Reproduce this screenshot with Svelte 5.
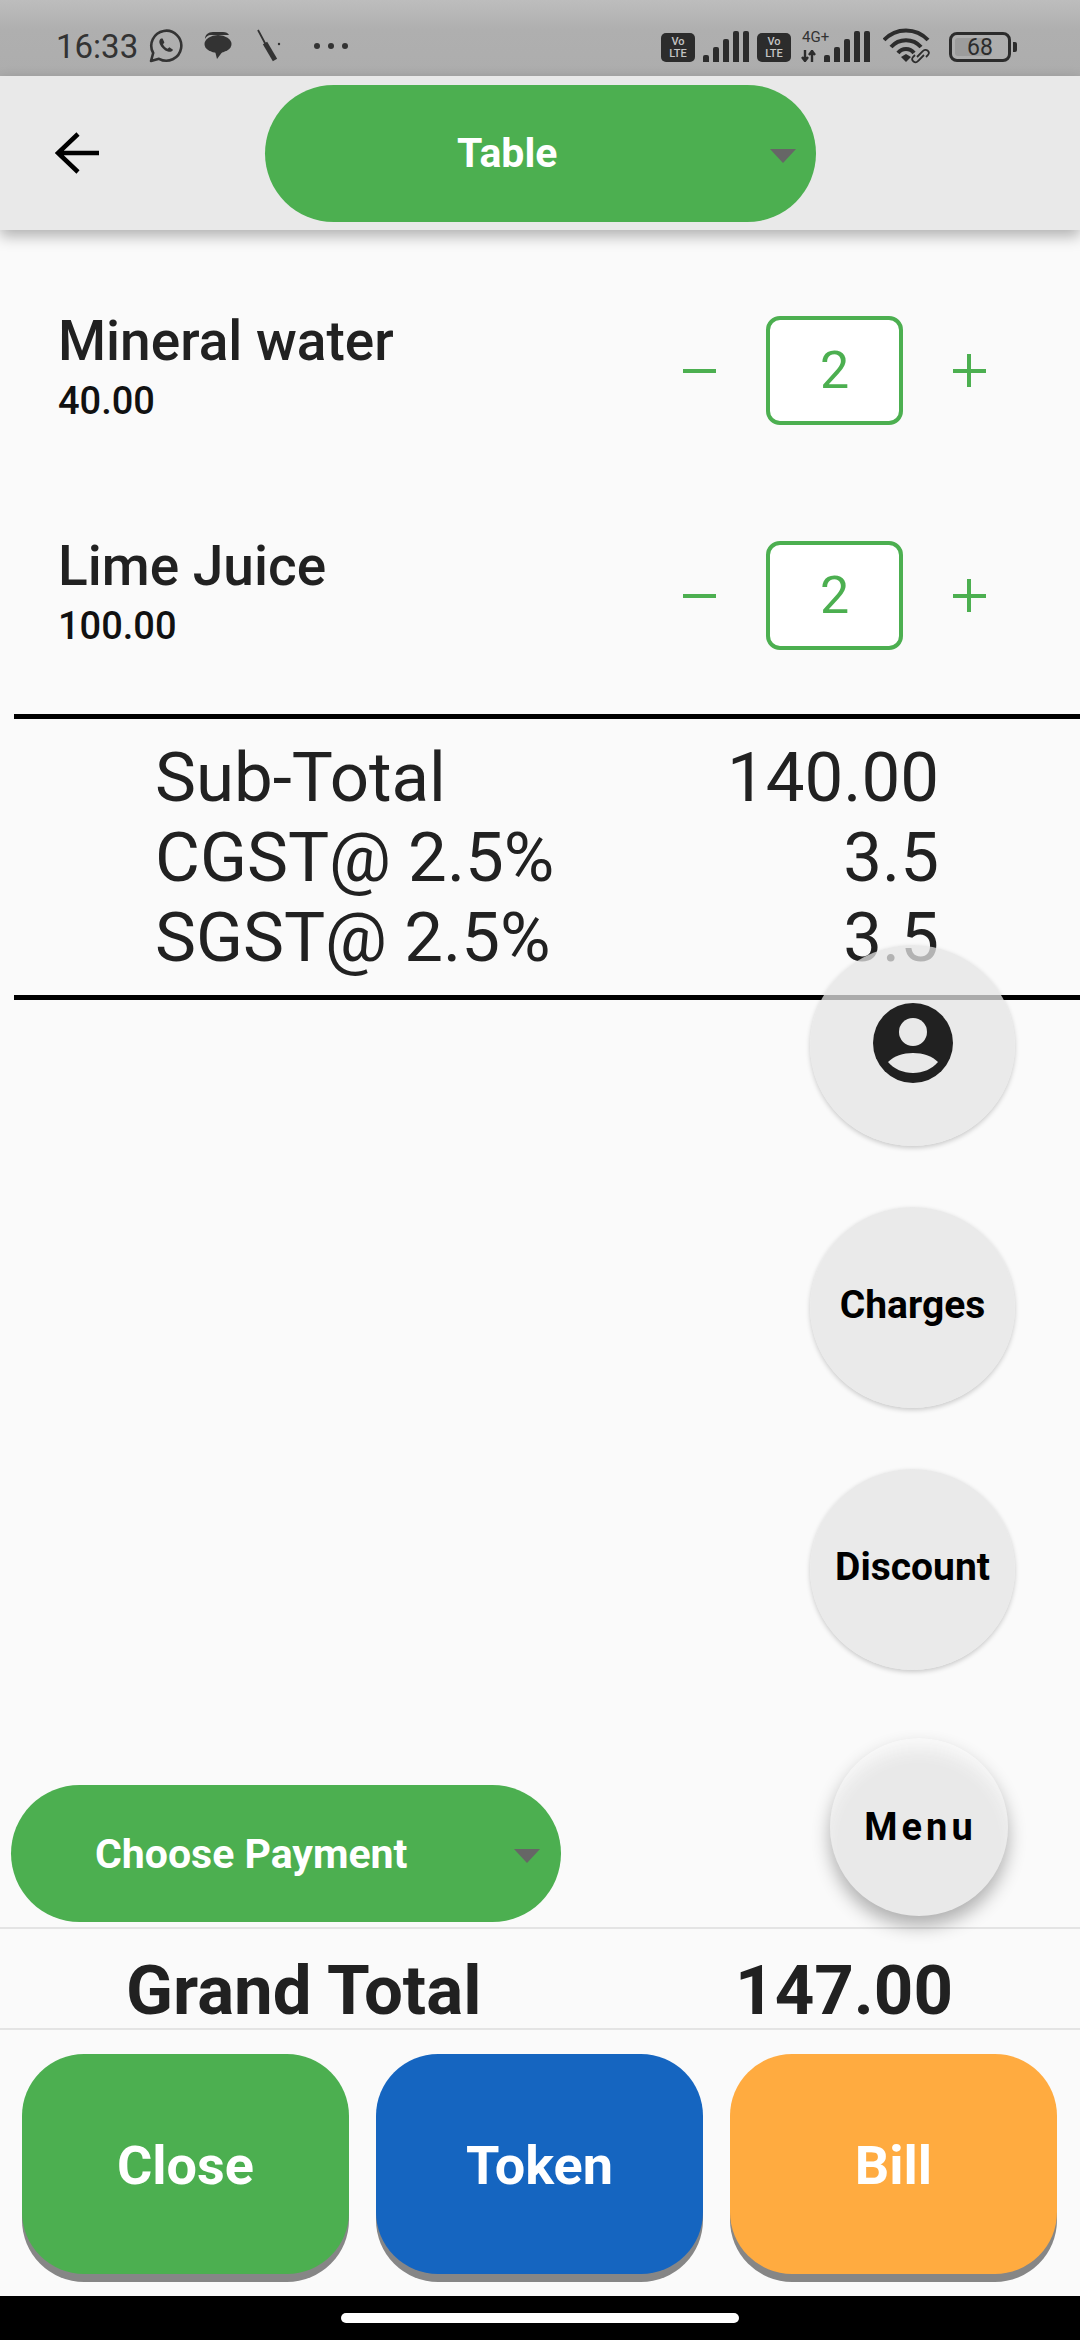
<script>
	const items = [
		{ name: 'Mineral water', price: '40.00', qty: 2 },
		{ name: 'Lime Juice', price: '100.00', qty: 2 }
	];
	const taxes = [
		{ label: 'Sub-Total', value: '140.00' },
		{ label: 'CGST@ 2.5%', value: '3.5' },
		{ label: 'SGST@ 2.5%', value: '3.5' }
	];
	const actions = [
		{ label: 'Close', color: 'green' },
		{ label: 'Token', color: 'blue' },
		{ label: 'Bill', color: 'orange' }
	];
	const bars = [10, 18, 26, 34];
</script>

<div class="page">
	<header class="status">
		<div class="status-left">
			<span class="clock">16:33</span>
			<svg class="wa" viewBox="0 0 34 34" width="34" height="34">
				<path d="M2 32l2.2-8A15 15 0 1 1 10 29.8z" fill="none" stroke="#333" stroke-width="2.6" stroke-linejoin="round" />
				<path d="M12 9.5c-1.6 1-2.2 3-1.2 5.4 1.4 3.4 4.6 6.4 8 7.6 2.6.9 4.4 0 5.2-1.8l-3.6-2.4-1.8 1.4c-2-.8-3.6-2.4-4.6-4.4l1.4-1.8-1.8-4z" fill="#333" />
			</svg>
			<svg class="chat" viewBox="0 0 30 30" width="30" height="30">
				<path d="M10 1h10c3 0 5 1 6 3H8C5 4 3 6 2 8c0-4 3-7 8-7z" fill="#333" />
				<ellipse cx="15" cy="13" rx="13.500" ry="9" fill="#333" />
				<path d="M12 20l2 8 6-8z" fill="#333" />
			</svg>
			<svg class="tool" viewBox="0 0 26 34" width="26" height="34">
				<path d="M2 1l8 15" stroke="#333" stroke-width="1.800" fill="none" />
				<path d="M9 14l10 17" stroke="#333" stroke-width="5" fill="none" />
				<circle cx="23" cy="15" r="1.200" fill="#333" />
			</svg>
			<span class="dots"><i></i><i></i><i></i></span>
		</div>
		<div class="status-right">
			<span class="volte"><b>Vo</b><b>LTE</b></span>
			<span class="signal">
				{#each bars as h}<i style="height: {h - 3}px"></i>{/each}
				<i style="height: 31px"></i>
			</span>
			<span class="volte"><b>Vo</b><b>LTE</b></span>
			<span class="net">
				<span class="net-label">4G+</span>
				<svg viewBox="0 0 16 12" width="16" height="12">
					<path d="M4 0v12M1 7l3 4 3-4M11 12V0M8 5l3-4 3 4" stroke="#2c2c2c" stroke-width="2.400" fill="none" />
				</svg>
			</span>
			<span class="signal tight">
				{#each bars as h}<i style="height: {h - 3}px"></i>{/each}
				<i style="height: 31px"></i>
			</span>
			<svg class="wifi" viewBox="0 0 50 36" width="50" height="36">
				<path d="M1 12a30 30 0 0 1 44 0M8 19a20 20 0 0 1 30 0M15 25a10 10 0 0 1 16 0" stroke="#2c2c2c" stroke-width="4" fill="none" />
				<path d="M18 29l5-3 5 3-5 5z" fill="#2c2c2c" />
				<path d="M34 29l6-6a3 3 0 0 1 5 4l-2 2M41 27l-6 6a3 3 0 0 1-5-4l2-2" stroke="#2c2c2c" stroke-width="1.800" fill="none" />
			</svg>
			<span class="battery">
				<span class="battery-body"><span class="battery-fill"></span><span class="battery-num">68</span></span>
				<span class="battery-cap"></span>
			</span>
		</div>
	</header>

	<nav class="appbar">
		<svg class="back" viewBox="0 0 44 44" width="44" height="44">
			<path d="M44 22H4M23 3L3 22l20 19" stroke="#000" stroke-width="4.500" fill="none" />
		</svg>
		<div class="pill table-pill">
			<span>Table</span>
			<i class="caret"></i>
		</div>
	</nav>

	<section class="items">
		{#each items as item}
			<div class="item">
				<div class="item-info">
					<div class="item-name">{item.name}</div>
					<div class="item-price">{item.price}</div>
				</div>
				<div class="stepper">
					<span class="step minus"></span>
					<span class="qty">{item.qty}</span>
					<span class="step plus"></span>
				</div>
			</div>
		{/each}
	</section>

	<section class="summary">
		{#each taxes as row}
			<div class="summary-row">
				<span>{row.label}</span>
				<span>{row.value}</span>
			</div>
		{/each}
	</section>

	<div class="spacer"></div>

	<div class="pill pay-pill">
		<span>Choose Payment</span>
		<i class="caret"></i>
	</div>

	<div class="grand">
		<span>Grand Total</span>
		<span>147.00</span>
	</div>

	<div class="actions">
		{#each actions as a}
			<button class="action {a.color}">{a.label}</button>
		{/each}
	</div>

	<footer class="navbar"><span class="home"></span></footer>

	<div class="fabs">
		<button class="fab" aria-label="Customer">
			<svg viewBox="0 0 80 80" width="80" height="80">
				<circle cx="40" cy="40" r="40" fill="#212121" />
				<circle cx="40" cy="29" r="14" fill="#e9e9e9" />
				<path d="M15 59c6-6 15-9 25-9s19 3 25 9c-6 7-15 11-25 11s-19-4-25-11z" fill="#e9e9e9" />
			</svg>
		</button>
		<button class="fab">Charges</button>
		<button class="fab">Discount</button>
	</div>
	<button class="menu-fab">Menu</button>
</div>

<style>
	:global(body) {
		margin: 0;
		background: #fafafa;
	}

	.page {
		position: relative;
		width: 1080px;
		height: 2340px;
		overflow: hidden;
		display: flex;
		flex-direction: column;
		background: #fafafa;
		font-family: Roboto, sans-serif;
		color: #212121;
	}

	.status {
		height: 76px;
		flex-shrink: 0;
		box-sizing: border-box;
		padding: 22px 63px 0 56px;
		display: flex;
		justify-content: space-between;
		align-items: flex-start;
		background: linear-gradient(#bdbdbd, #afafaf 40%, #adadad);
		color: #333;
	}

	.status-left {
		display: flex;
		align-items: center;
		height: 48px;
	}

	.clock {
		font-size: 33px;
		width: 92px;
	}

	.wa {
		margin-left: 1px;
	}

	.chat {
		margin-left: 20px;
	}

	.tool {
		margin-left: 23px;
	}

	.dots {
		display: flex;
		gap: 8px;
		margin-left: 32px;
	}

	.dots i {
		width: 6px;
		height: 6px;
		border-radius: 50%;
		background: #333;
	}

	.status-right {
		display: flex;
		align-items: flex-end;
		height: 40px;
	}

	.volte {
		width: 34px;
		height: 29px;
		border-radius: 5px;
		background: #2c2c2c;
		display: flex;
		flex-direction: column;
		align-items: center;
		justify-content: center;
		font-size: 11px;
		line-height: 12px;
		color: #c4c4c4;
	}

	.volte b {
		font-weight: 500;
	}

	.signal {
		display: flex;
		align-items: flex-end;
		gap: 4px;
		height: 31px;
		margin: 0 8px;
	}

	.signal i {
		width: 6px;
		border-radius: 2px 2px 0 0;
		background: #2c2c2c;
	}

	.signal.tight {
		margin: 0 0 0 2px;
	}

	.net {
		position: relative;
		width: 21px;
		margin-left: 10px;
		height: 31px;
		display: flex;
		align-items: flex-end;
	}

	.net-label {
		position: absolute;
		left: 1px;
		top: -3px;
		font-size: 15px;
		color: #333;
	}

	.wifi {
		margin: 0 0 -2px 13px;
	}

	.battery {
		display: flex;
		align-items: center;
		margin: 0 0 0 16px;
	}

	.battery-body {
		position: relative;
		width: 62px;
		height: 30px;
		box-sizing: border-box;
		border: 3px solid #2c2c2c;
		border-radius: 8px;
		display: flex;
		align-items: center;
		justify-content: center;
	}

	.battery-fill {
		position: absolute;
		left: 3px;
		top: 3px;
		bottom: 3px;
		width: 36px;
		border-radius: 3px;
		background: #9c9c9c;
	}

	.battery-num {
		position: relative;
		font-size: 23px;
		color: #2c2c2c;
	}

	.battery-cap {
		width: 4px;
		height: 10px;
		margin-left: 2px;
		border-radius: 0 2px 2px 0;
		background: #2c2c2c;
	}

	.appbar {
		height: 154px;
		flex-shrink: 0;
		box-sizing: border-box;
		display: flex;
		align-items: center;
		padding-left: 55px;
		background: #e9e9e9;
		box-shadow: 0 6px 14px rgba(0, 0, 0, 0.3);
		position: relative;
	}

	.back {
		flex-shrink: 0;
	}

	.pill {
		position: relative;
		height: 137px;
		border-radius: 69px;
		background: #4caf50;
		color: #fff;
		display: flex;
		align-items: center;
		font-weight: 700;
		box-sizing: border-box;
	}

	.table-pill {
		width: 551px;
		margin-left: 166px;
		padding-left: 192px;
		font-size: 41px;
	}

	.caret {
		position: absolute;
		top: 64px;
		width: 0;
		height: 0;
		border-left: 13px solid transparent;
		border-right: 13px solid transparent;
		border-top: 14px solid #666;
	}

	.table-pill .caret {
		right: 20px;
	}

	.items {
		padding-top: 28px;
		flex-shrink: 0;
	}

	.item {
		height: 225px;
		box-sizing: border-box;
		padding: 0 94px 0 58px;
		display: flex;
		justify-content: space-between;
		align-items: center;
	}

	.item-info {
		padding-top: 9px;
	}

	.item-name {
		font-size: 55px;
		font-weight: 500;
		line-height: 58px;
		margin-top: -6px;
	}

	.item-price {
		font-size: 38px;
		font-weight: 500;
		line-height: 62px;
		color: #111;
	}

	.stepper {
		display: flex;
		align-items: center;
	}

	.qty {
		width: 137px;
		height: 109px;
		box-sizing: border-box;
		border: 4px solid #4caf50;
		border-radius: 14px;
		background: #fff;
		color: #4caf50;
		font-size: 52px;
		display: flex;
		align-items: center;
		justify-content: center;
		margin: 0 50px;
	}

	.step {
		position: relative;
		width: 33px;
		height: 33px;
	}

	.step::before,
	.plus::after {
		content: '';
		position: absolute;
		background: #4caf50;
	}

	.step::before {
		left: 0;
		right: 0;
		top: 15px;
		height: 4px;
	}

	.plus::after {
		top: 0;
		bottom: 0;
		left: 14px;
		width: 4px;
	}

	.summary {
		margin: 6px 0 0 14px;
		height: 286px;
		box-sizing: border-box;
		border-top: 5px solid #000;
		border-bottom: 5px solid #000;
		padding: 19px 141px 0 141px;
		flex-shrink: 0;
	}

	.summary-row {
		display: flex;
		justify-content: space-between;
		font-size: 69px;
		line-height: 80px;
		font-weight: 400;
	}

	.spacer {
		flex: 1;
	}

	.pay-pill {
		width: 550px;
		margin-left: 11px;
		padding-left: 84px;
		font-size: 41px;
		flex-shrink: 0;
	}

	.pay-pill .caret {
		right: 21px;
	}

	.grand {
		margin-top: 5px;
		height: 103px;
		box-sizing: border-box;
		border-top: 2px solid #e4e4e4;
		border-bottom: 2px solid #e4e4e4;
		padding: 24px 127px 0 126px;
		display: flex;
		justify-content: space-between;
		align-items: center;
		font-size: 69px;
		font-weight: 700;
		flex-shrink: 0;
	}

	.actions {
		display: flex;
		justify-content: space-between;
		padding: 24px 23px 0 22px;
		height: 266px;
		box-sizing: border-box;
		flex-shrink: 0;
	}

	.action {
		width: 327px;
		height: 220px;
		padding: 2px 0 0;
		border: none;
		border-radius: 62px;
		color: #fff;
		font-family: inherit;
		font-size: 54px;
		font-weight: 700;
		box-shadow: 0 8px 0 #868686;
	}

	.green {
		background: #4caf50;
	}

	.blue {
		background: #1565c0;
	}

	.orange {
		background: #ffab40;
	}

	.navbar {
		height: 44px;
		background: #000;
		display: flex;
		justify-content: center;
		padding-top: 17px;
		box-sizing: border-box;
		flex-shrink: 0;
	}

	.home {
		width: 398px;
		height: 10px;
		border-radius: 5px;
		background: #fff;
	}

	.fabs {
		position: absolute;
		top: 945px;
		left: 810px;
		display: flex;
		flex-direction: column;
		gap: 61px;
	}

	.fab {
		width: 205px;
		height: 201px;
		padding: 0 0 6px;
		border: none;
		border-radius: 50%;
		background: rgba(228, 228, 228, 0.75);
		box-shadow: 0 2px 5px rgba(0, 0, 0, 0.2);
		display: flex;
		align-items: center;
		justify-content: center;
		font-family: inherit;
		font-size: 39px;
		font-weight: 700;
		color: #000;
	}

	.menu-fab {
		position: absolute;
		left: 830px;
		top: 1738px;
		width: 178px;
		height: 178px;
		padding: 0 0 0 3px;
		border: none;
		border-radius: 50%;
		background: #e9e9e9;
		box-shadow:
			0 10px 18px rgba(0, 0, 0, 0.3),
			inset 0 18px 18px -8px #fafafa;
		font-family: inherit;
		font-size: 38px;
		font-weight: 700;
		letter-spacing: 4px;
		color: #000;
	}
</style>
